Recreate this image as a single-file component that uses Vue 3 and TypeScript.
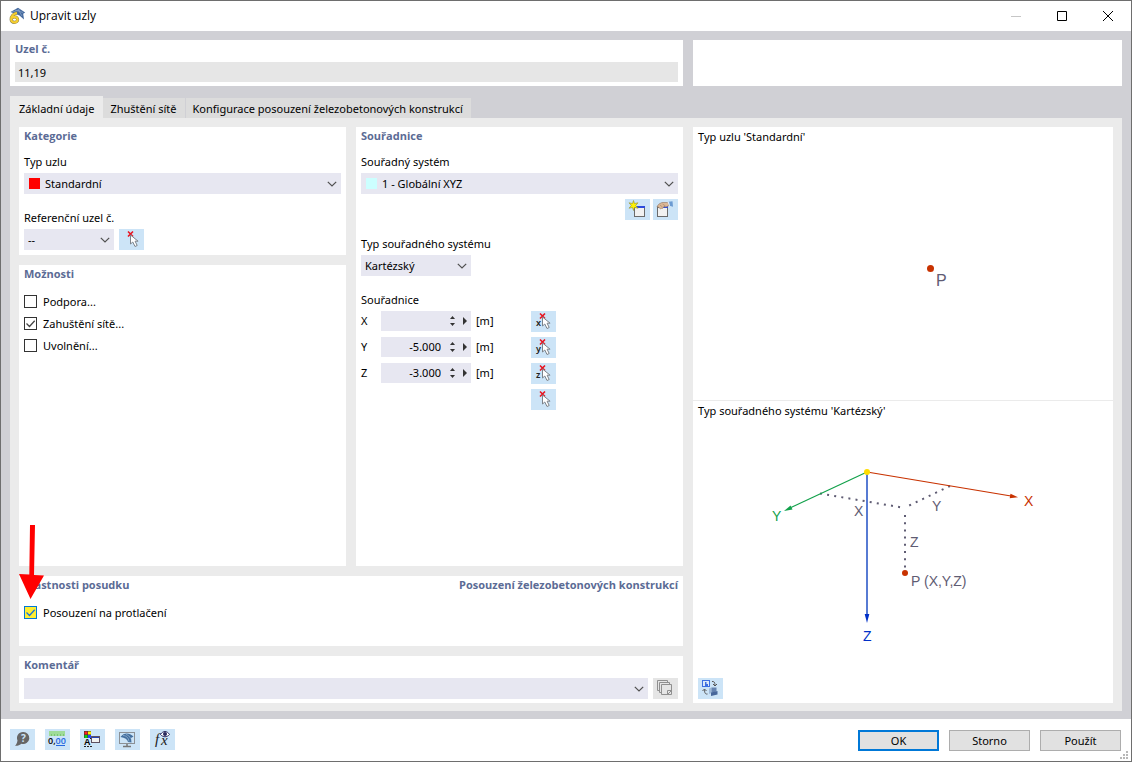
<script setup lang="ts">
import { ref } from 'vue'

interface Option {
  id: string
  label: string
  checked: boolean
}

interface Coordinate {
  axis: string
  value: string
}

const tabs = ['Základní údaje', 'Zhuštění sítě', 'Konfigurace posouzení železobetonových konstrukcí']
const activeTab = ref(0)

const options = ref<Option[]>([
  { id: 'support', label: 'Podpora...', checked: false },
  { id: 'refinement', label: 'Zahuštění sítě...', checked: true },
  { id: 'release', label: 'Uvolnění...', checked: false },
])

const coordinates = ref<Coordinate[]>([
  { axis: 'X', value: '' },
  { axis: 'Y', value: '-5.000' },
  { axis: 'Z', value: '-3.000' },
])

const nodeNumbers = ref('11,19')
const punching = ref(true)

function step(row: Coordinate, delta: number): void {
  row.value = ((Number(row.value) || 0) + delta).toFixed(3)
}
</script>

<template>
  <div class="window">
    <svg class="defs" aria-hidden="true">
      <symbol id="pick" viewBox="0 0 25 21">
        <path d="M9 2.500l5 5M14 2.500l-5 5" stroke="#e8131f" stroke-width="1.600" fill="none" />
        <path d="M11.500 6v9l2.300-2 2.200 4.500 2.200-1-2.100-4.300h3z" fill="#fff" stroke="#7d838a" stroke-width="1" />
      </symbol>
      <symbol id="chevron" viewBox="0 0 10 6">
        <path d="M.8.8L5 5 9.200.8" fill="none" stroke="#505050" stroke-width="1.200" />
      </symbol>
    </svg>

    <header class="titlebar">
      <svg class="logo" width="18" height="18" viewBox="0 0 18 18" aria-hidden="true">
        <path d="M2.500 5L10 .8 17.200 5.500l-2 1.300.8 5.700-4.500-4z" fill="#456a9e" />
        <path d="M4 5l8-2M7 3l8 2.500M10 2l4 7" stroke="#8ea8cc" stroke-width=".7" />
        <path d="M9 6C6 6.500 3.200 9 3.200 12.500a3.200 2.800 0 1 0 3.200-2.700c-1.500 0-2.500.8-3 1.700" fill="none" stroke="#8d8250" stroke-width="3.200" />
        <path d="M9 6C6 6.500 3.200 9 3.200 12.500a3.200 2.800 0 1 0 3.200-2.700c-1.500 0-2.500.8-3 1.700" fill="none" stroke="#f7cf2d" stroke-width="2.200" />
      </svg>
      <h1>Upravit uzly</h1>
      <div class="caption-buttons">
        <button type="button" aria-label="Minimalizovat" disabled>
          <svg width="10" height="10" viewBox="0 0 10 10"><path d="M0 5.500h10" stroke="#c6c6c6" /></svg>
        </button>
        <button type="button" aria-label="Maximalizovat">
          <svg width="10" height="10" viewBox="0 0 10 10"><path d="M.5.5h9v9h-9z" fill="none" stroke="#000" /></svg>
        </button>
        <button type="button" aria-label="Zavřít">
          <svg width="10" height="10" viewBox="0 0 10 10"><path d="M0 0l10 10M10 0L0 10" stroke="#000" /></svg>
        </button>
      </div>
    </header>

    <main class="content">
      <div class="top-row">
        <section class="card">
          <h2><label for="node-no">Uzel č.</label></h2>
          <input id="node-no" v-model="nodeNumbers" class="node-no" type="text" readonly />
        </section>
        <section class="card"></section>
      </div>

      <div class="tabs" role="tablist">
        <button
          v-for="(tab, i) in tabs"
          :key="tab"
          type="button"
          role="tab"
          :aria-selected="i === activeTab"
          :class="{ active: i === activeTab }"
          @click="activeTab = i"
        >{{ tab }}</button>
      </div>

      <div class="tab-panel" role="tabpanel">
        <div class="form">
          <div class="columns">
            <div class="stack">
              <section class="card category">
                <h2>Kategorie</h2>
                <label class="caption" for="node-type">Typ uzlu</label>
                <div class="select">
                  <span class="swatch red"></span>
                  <select id="node-type"><option>Standardní</option></select>
                  <svg class="chevron" aria-hidden="true"><use href="#chevron" /></svg>
                </div>
                <label class="caption next" for="ref-node">Referenční uzel č.</label>
                <div class="inline">
                  <div class="select ref">
                    <select id="ref-node"><option>--</option></select>
                    <svg class="chevron" aria-hidden="true"><use href="#chevron" /></svg>
                  </div>
                  <button type="button" class="tool" aria-label="Vybrat uzel">
                    <svg width="25" height="21"><use href="#pick" /></svg>
                  </button>
                </div>
              </section>

              <section class="card grow">
                <h2>Možnosti</h2>
                <div class="checks">
                  <label v-for="option in options" :key="option.id" class="check">
                    <input v-model="option.checked" type="checkbox" />
                    <svg class="tick" viewBox="0 0 13 13"><path d="M2.500 6.500l3 3 5.200-5.700" /></svg>
                    <span>{{ option.label }}</span>
                  </label>
                </div>
              </section>
            </div>

            <section class="card">
              <h2>Souřadnice</h2>
              <label class="caption" for="cs">Souřadný systém</label>
              <div class="select">
                <span class="swatch cyan"></span>
                <select id="cs"><option>1 - Globální XYZ</option></select>
                <svg class="chevron" aria-hidden="true"><use href="#chevron" /></svg>
              </div>
              <div class="cs-tools">
                <button type="button" class="tool" aria-label="Nový souřadný systém">
                  <svg width="25" height="21" viewBox="0 0 25 21">
                    <path d="M9 7h11v11H9z" fill="#6a6a6a" />
                    <path d="M10 9h9v8h-9z" fill="#f1f1f1" />
                    <path d="M11 8h9" stroke="#2c4bdc" stroke-width="2" />
                    <path d="M8.500 1.500l1 3 3.500-.7-2.300 2.700 2.300 2.700-3.500-.7-1 3-1-3-3.500.7 2.300-2.700L4 3.800l3.500.7z" fill="#fff200" stroke="#8d8a35" stroke-width=".6" />
                  </svg>
                </button>
                <button type="button" class="tool" aria-label="Upravit souřadný systém">
                  <svg width="25" height="21" viewBox="0 0 25 21">
                    <path d="M4 7h11v11H4z" fill="#6a6a6a" />
                    <path d="M5 9h9v8H5z" fill="#f1f1f1" />
                    <path d="M10 8h5" stroke="#2c4bdc" stroke-width="2" />
                    <path d="M4 7.500l2-2.500 3-1.500h6l1 3-3 1.500-2-.5-1.500 2L9 9l-1.500 1L6 8.500z" fill="#dcb896" stroke="#8f745f" stroke-width=".6" />
                    <path d="M7 6l2.500 2M9.500 5l3 2" stroke="#9d7d62" stroke-width=".6" />
                    <path d="M15.500 2.800l4-.5.500 5.500-3.500-1z" fill="#6c9bd2" />
                    <path d="M14.500 3l1.500-.3 1 4-1 .3z" fill="#dfeaf5" />
                  </svg>
                </button>
              </div>
              <label class="caption next" for="cs-type">Typ souřadného systému</label>
              <div class="select cs-type">
                <select id="cs-type"><option>Kartézský</option></select>
                <svg class="chevron" aria-hidden="true"><use href="#chevron" /></svg>
              </div>
              <p class="caption next">Souřadnice</p>
              <div class="coords">
                <div v-for="row in coordinates" :key="row.axis" class="coord">
                  <label :for="'coord-' + row.axis">{{ row.axis }}</label>
                  <div class="spin">
                    <input :id="'coord-' + row.axis" v-model="row.value" type="text" />
                    <div class="steps">
                      <button type="button" aria-label="Zvýšit" @click="step(row, 1)">
                        <svg width="5" height="3" viewBox="0 0 5 3"><path d="M0 3L2.500 0 5 3z" /></svg>
                      </button>
                      <button type="button" aria-label="Snížit" @click="step(row, -1)">
                        <svg width="5" height="3" viewBox="0 0 5 3"><path d="M0 0h5L2.500 3z" /></svg>
                      </button>
                    </div>
                    <button type="button" class="more" aria-label="Další hodnoty">
                      <svg width="4" height="8" viewBox="0 0 4 8"><path d="M0 0l4 4-4 4z" /></svg>
                    </button>
                  </div>
                  <span class="unit">[m]</span>
                  <button type="button" class="tool" :aria-label="'Vybrat ' + row.axis">
                    <svg width="25" height="21" viewBox="0 0 25 21">
                      <text x="5" y="15" class="pick-axis">{{ row.axis.toLowerCase() }}</text>
                      <use href="#pick" width="25" height="21" />
                    </svg>
                  </button>
                </div>
                <div class="coord">
                  <button type="button" class="tool last" aria-label="Vybrat bod">
                    <svg width="25" height="21"><use href="#pick" /></svg>
                  </button>
                </div>
              </div>
            </section>
          </div>

          <section class="card design">
            <div class="heads">
              <h2>Vlastnosti posudku</h2>
              <h2>Posouzení železobetonových konstrukcí</h2>
            </div>
            <div class="checks">
              <label class="check highlight">
                <input v-model="punching" type="checkbox" />
                <svg class="tick" viewBox="0 0 13 13"><path d="M2.500 6.500l3 3 5.200-5.700" /></svg>
                <span>Posouzení na protlačení</span>
              </label>
            </div>
            <svg class="pointer" width="26" height="76" viewBox="0 0 26 76" aria-hidden="true">
              <path d="M11 0h5l-1 50 10 .5-13.500 23.500L0 49l10.300.5z" fill="#f00" />
            </svg>
          </section>

          <section class="card">
            <h2><label for="comment">Komentář</label></h2>
            <div class="inline comment">
              <div class="select">
                <select id="comment"><option></option></select>
                <svg class="chevron" aria-hidden="true"><use href="#chevron" /></svg>
              </div>
              <button type="button" class="tool" aria-label="Převzít komentář" disabled>
                <svg width="25" height="21" viewBox="0 0 25 21" fill="#e5e5e5" stroke="#8f8f8f">
                  <path d="M4.500 2.500h10v10h-10z" />
                  <path d="M6.500 4.500h10v10h-10z" />
                  <path d="M8.500 6.500h10v10h-10z" />
                  <path d="M14.500 16.500v-4h4M15 16l3-3" fill="none" />
                </svg>
              </button>
            </div>
          </section>
        </div>

        <div class="previews">
          <figure>
            <figcaption>Typ uzlu 'Standardní'</figcaption>
            <svg class="drawing" viewBox="0 0 420 253">
              <circle cx="237.500" cy="121.500" r="3.500" fill="#c83200" />
              <text x="243" y="139" font-size="16" class="dim">P</text>
            </svg>
          </figure>
          <figure>
            <figcaption>Typ souřadného systému 'Kartézský'</figcaption>
            <svg class="drawing" viewBox="0 0 420 257" font-size="14">
              <g fill="none" stroke="#5f5c73" stroke-width="2" stroke-dasharray="2 5.200">
                <path d="M127 72.500l85 14.500" />
                <path d="M257 65l-45 21.500" />
                <path d="M212 94v56" />
              </g>
              <path d="M174 51v145" stroke="#1f4fc4" stroke-width="1.500" />
              <path d="M174 202l-2.300-9h4.600z" fill="#0030c8" />
              <path d="M174 51L98 86.500" stroke="#12a14b" stroke-width="1.200" />
              <path d="M91 90l6.500-5.500 2 4z" fill="#12a14b" />
              <path d="M174 51l144 24" stroke="#c83200" stroke-width="1.200" />
              <path d="M325 76.200l-8.300 1 .8-4.400z" fill="#c83200" />
              <circle cx="174" cy="51" r="3" fill="#ffdc00" />
              <circle cx="212" cy="152" r="3" fill="#c83200" />
              <text x="331" y="85" fill="#c83200">X</text>
              <text x="79" y="100" fill="#12a14b">Y</text>
              <text x="170" y="220" fill="#0030c8">Z</text>
              <text x="161" y="95" class="dim">X</text>
              <text x="239" y="90" class="dim">Y</text>
              <text x="217" y="126" class="dim">Z</text>
              <text x="218" y="165" class="dim">P (X,Y,Z)</text>
            </svg>
            <button type="button" class="tool switch" aria-label="Přepnout zobrazení">
              <svg width="25" height="21" viewBox="0 0 25 21">
                <path d="M4 2h8v7H4z" fill="#3d6fe0" />
                <path d="M5 3h6v5H5z" fill="#dbe9fa" />
                <path d="M7 4h1.500v2H10v2H7z" fill="#3d6fe0" />
                <path d="M14 3.500c2-.3 3 .7 3 4M15 6l2 2 2-2" fill="none" stroke="#555" />
                <path d="M9.500 16c-2 .3-3-.7-3-4.500M4.500 13l2-2 2 2" fill="none" stroke="#555" />
                <path d="M11 10.500l2.500-1v5.500L11 16z" fill="#9fb9d8" />
                <path d="M13.500 9.500h5v4l-5 1.200z" fill="#6583b0" />
                <path d="M13 14.500l6.500-1.500v3.500L13 18z" fill="#47679b" />
              </svg>
            </button>
          </figure>
        </div>
      </div>
    </main>

    <footer class="footer">
      <div class="tools">
        <button type="button" class="tool" aria-label="Nápověda">
          <svg width="25" height="21" viewBox="0 0 25 21">
            <path d="M13 3a6 6 0 1 1-1.500 11.700C10 16 7.500 17 5 16.800 6.500 15.500 7 14 7.500 11.500A6 6 0 0 1 13 3z" fill="#666" />
            <text x="11" y="13" class="help-mark">?</text>
          </svg>
        </button>
        <button type="button" class="tool" aria-label="Jednotky a desetinná místa">
          <svg width="25" height="21" viewBox="0 0 25 21">
            <path d="M4 2h16v5H4z" fill="#9fdc98" />
            <path d="M6.500 5v2M9.500 5v2M12.500 5v2M15.500 5v2M18.500 5v2" stroke="#7cc475" />
            <text x="3" y="15" class="digits">0,<tspan fill="#2468e0">00</tspan></text>
            <path d="M11 16.500h9" stroke="#2468e0" />
          </svg>
        </button>
        <button type="button" class="tool" aria-label="Nastavení zobrazení">
          <svg width="25" height="21" viewBox="0 0 25 21">
            <path d="M4 2h7v7H4z" fill="#333" />
            <path d="M4.500 2.500h3v3h-3z" fill="#f22" />
            <path d="M8 2.500h3v3H8z" fill="#fe0" />
            <path d="M4.500 6h3v3h-3z" fill="#1c1" />
            <path d="M8 6h3v3H8z" fill="#24f" />
            <text x="4" y="16" class="letter">A</text>
            <path d="M4 17.500h9" stroke="#222" stroke-dasharray="2 1" />
            <path d="M10 9.500h2" stroke="#222" />
            <rect x="11.500" y="7.500" width="8" height="6" fill="#f1f1f1" stroke="#5d5060" />
            <path d="M12 8.500h7" stroke="#2442b8" />
          </svg>
        </button>
        <button type="button" class="tool" aria-label="Zobrazení modelu">
          <svg width="25" height="21" viewBox="0 0 25 21">
            <rect x="4.500" y="3.500" width="15" height="11" fill="#cce4f7" stroke="#8b9095" />
            <path d="M12 15v2M8 17.500h8" stroke="#777" stroke-width="1.500" />
            <path d="M5.500 8C9 3.500 14 3.500 18.500 7.500L16 9l.5 4.500-3.500-.5C12.500 10.500 10 8.500 5.500 8z" fill="#44709f" />
            <path d="M8 6.500c3 0 5.500 2 6 6M11 5.500c2 .5 4 2 4.500 4" fill="none" stroke="#9dbad8" stroke-width=".7" />
          </svg>
        </button>
        <button type="button" class="tool" aria-label="Parametry a vzorce">
          <svg width="25" height="21" viewBox="0 0 25 21">
            <text x="5" y="15" class="fx">f</text>
            <text x="11" y="16" class="fx">x</text>
            <path d="M10.500 5.500c2.500-4 6.500-4 9 0-2.500 3-6.500 3-9 0z" fill="#fff" stroke="#29295c" />
            <circle cx="15" cy="5" r="2" fill="#29295c" />
          </svg>
        </button>
      </div>
      <div class="actions">
        <button type="submit" class="action primary">OK</button>
        <button type="button" class="action">Storno</button>
        <button type="button" class="action">Použít</button>
      </div>
      <svg class="grip" width="8" height="8" viewBox="0 0 8 8" fill="#b8b8b8" aria-hidden="true">
        <path d="M6 0h2v2H6zM3 3h2v2H3zM6 3h2v2H6zM0 6h2v2H0zM3 6h2v2H3zM6 6h2v2H6z" />
      </svg>
    </footer>
  </div>
</template>

<style>
body {
  background: #fff;
}
</style>

<style scoped>
.window,
.window * {
  box-sizing: border-box;
}

.window {
  position: relative;
  display: flex;
  flex-direction: column;
  min-height: 100vh;
  border: 1px solid #6e6e6e;
  background: #fff;
  color: #000;
  font: 11px/18px "Noto Sans", "Open Sans", sans-serif;
}

.defs {
  position: absolute;
  width: 0;
  height: 0;
}

h1,
h2,
p,
figure {
  margin: 0;
}

button,
input,
select {
  margin: 0;
  padding: 0;
  border: 0;
  border-radius: 0;
  background: none;
  color: inherit;
  font: inherit;
}

svg {
  display: block;
}

.titlebar {
  display: flex;
  align-items: center;
  height: 30px;
  padding-left: 7px;
}

.titlebar h1 {
  margin-left: 4px;
  font-family: "Open Sans", sans-serif;
  font-size: 12px;
  font-weight: 400;
}

.caption-buttons {
  display: flex;
  height: 100%;
  margin-left: auto;
}

.caption-buttons button {
  display: grid;
  place-items: center;
  width: 46px;
}

.content {
  display: flex;
  flex: 1;
  flex-direction: column;
  padding: 9px 9px 8px;
  background: #d0d0d5;
}

.top-row {
  display: grid;
  grid-template-columns: minmax(0, 1fr) 429px;
  gap: 10px;
}

.card {
  padding: 0 5px 4px;
  background: #fff;
}

h2 {
  color: #5b6b95;
  font-family: "Open Sans", sans-serif;
  font-size: 11px;
  font-weight: 700;
  line-height: 18px;
}

.node-no {
  display: block;
  width: 100%;
  height: 20px;
  margin-top: 4px;
  padding: 0 3px;
  background: #e6e6e6;
}

.tabs {
  display: flex;
  align-items: flex-end;
  margin-top: 10px;
}

.tabs button {
  height: 20px;
  padding: 2px 8px 0 7px;
  border-right: 1px solid #d0d0d5;
  background: #dcdcdc;
}

.tabs .active {
  height: 22px;
  padding: 4px 9px 0;
  border-right: 0;
  background: #ebebeb;
}

.tab-panel {
  display: grid;
  flex: 1;
  grid-template-columns: minmax(0, 1fr) 420px;
  gap: 10px;
  padding: 9px 9px 8px;
  background: #ebebeb;
}

.form,
.stack {
  display: flex;
  flex-direction: column;
  gap: 10px;
}

.columns {
  display: grid;
  flex: 1;
  grid-template-columns: minmax(0, 1fr) minmax(0, 1fr);
  gap: 10px;
}

.grow {
  flex: 1;
}

.category {
  padding-bottom: 5px;
}

.caption {
  display: block;
  margin: 8px 0 2px;
}

.caption.next {
  margin-top: 15px;
}

.select {
  display: flex;
  flex: 1;
  align-items: center;
  height: 21px;
  background: #e7e7f1;
}

.select select {
  flex: 1;
  min-width: 0;
  height: 21px;
  margin-right: -20px;
  padding: 0 20px 0 4px;
  appearance: none;
}

.chevron {
  width: 10px;
  height: 6px;
  margin: 0 4px 0 6px;
  pointer-events: none;
}

.swatch {
  width: 11px;
  height: 11px;
  margin: 0 1px 0 5px;
}

.red {
  background: #f00;
}

.cyan {
  background: #cff;
}

.inline {
  display: flex;
  gap: 5px;
}

.ref {
  flex: none;
  width: 90px;
}

.cs-type {
  width: 110px;
}

.tool {
  flex: none;
  width: 25px;
  height: 21px;
  background: #cce4f7;
}

.tool:disabled {
  background: #e5e5e5;
}

.cs-tools {
  display: flex;
  justify-content: flex-end;
  gap: 3px;
  margin-top: 5px;
}

.checks {
  margin-top: 8px;
}

.check {
  display: grid;
  grid-template-columns: 13px auto;
  grid-template-rows: 21px;
  align-items: center;
  justify-content: start;
  gap: 6px;
  height: 22px;
}

.check input {
  grid-area: 1 / 1;
  width: 13px;
  height: 13px;
  border: 1px solid #333;
  background: #fff;
  appearance: none;
}

.tick {
  grid-area: 1 / 1;
  width: 13px;
  height: 13px;
  fill: none;
  stroke: #444;
  stroke-width: 1.3px;
  pointer-events: none;
  visibility: hidden;
}

.check input:checked + .tick {
  visibility: visible;
}

.highlight input {
  border-color: #0078d7;
  background: #ffee33;
}

.highlight .tick {
  stroke: #1c74d8;
}

.coords {
  display: grid;
  gap: 5px;
}

.coord {
  display: grid;
  grid-template-columns: 20px 90px 60px 25px;
  height: 21px;
  line-height: 20px;
}

.coord .last {
  grid-column: 4;
}

.spin {
  display: flex;
  align-items: center;
  height: 20px;
  background: #e7e7f1;
}

.spin input {
  width: 60px;
  height: 20px;
  text-align: right;
}

.steps {
  display: grid;
  gap: 4px;
  margin-left: 9px;
}

.spin button {
  display: block;
  fill: #333;
}

.more {
  margin-left: 8px;
}

.unit {
  padding-left: 5px;
}

.pick-axis {
  font: 600 9px "Noto Sans", sans-serif;
  fill: #222;
}

.design {
  position: relative;
  min-height: 70px;
}

.heads {
  display: flex;
  justify-content: space-between;
}

.pointer {
  position: absolute;
  top: -51px;
  left: 0;
  pointer-events: none;
}

.comment {
  margin-top: 4px;
}

.previews {
  display: grid;
  grid-template-rows: 273fr 302fr;
  gap: 1px;
}

figure {
  display: flex;
  flex-direction: column;
  min-height: 0;
  background: #fff;
}

figcaption {
  height: 20px;
  padding: 1px 5px;
}

.drawing {
  flex: 1;
  width: 100%;
  min-height: 0;
  font-family: "Liberation Sans", Arial, sans-serif;
}

.dim {
  fill: #5f5c73;
}

.switch {
  margin: 0 5px 4px;
}

.footer {
  position: relative;
  display: flex;
  justify-content: space-between;
  padding: 10px 10px 10px 9px;
}

.tools,
.actions {
  display: flex;
  gap: 10px;
}

.action {
  width: 81px;
  height: 21px;
  margin-top: 1px;
  border: 1px solid #adadad;
  background: #e1e1e1;
}

.primary {
  border: 2px solid #0078d7;
}

.help-mark {
  font: bold 10px "Noto Sans", sans-serif;
  fill: #cce4f7;
}

.digits {
  font: 600 9px "Open Sans", sans-serif;
}

.letter {
  font: bold 9px "Liberation Sans", sans-serif;
}

.fx {
  font: italic 15px "Liberation Serif", serif;
  fill: #222;
}

.grip {
  position: absolute;
  right: 3px;
  bottom: 2px;
}
</style>
